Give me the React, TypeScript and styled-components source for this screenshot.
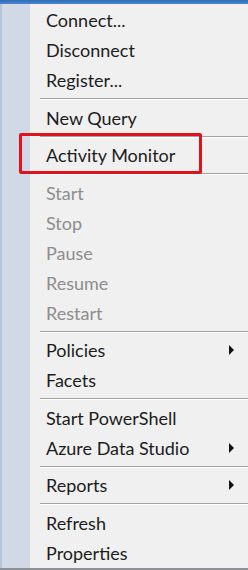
import React from "react";
import styled, { createGlobalStyle } from "styled-components";

const GlobalStyle = createGlobalStyle`
  html, body {
    margin: 0;
    padding: 0;
    background: #f0f0f0;
  }
  body {
    font-family: Lato, "Noto Sans", sans-serif;
  }
`;

type Entry =
  | { kind: "item"; label: string; disabled?: boolean; submenu?: boolean; highlighted?: boolean }
  | { kind: "sep" };

const entries: Entry[] = [
  { kind: "item", label: "Connect..." },
  { kind: "item", label: "Disconnect" },
  { kind: "item", label: "Register..." },
  { kind: "sep" },
  { kind: "item", label: "New Query" },
  { kind: "sep" },
  { kind: "item", label: "Activity Monitor", highlighted: true },
  { kind: "sep" },
  { kind: "item", label: "Start", disabled: true },
  { kind: "item", label: "Stop", disabled: true },
  { kind: "item", label: "Pause", disabled: true },
  { kind: "item", label: "Resume", disabled: true },
  { kind: "item", label: "Restart", disabled: true },
  { kind: "sep" },
  { kind: "item", label: "Policies", submenu: true },
  { kind: "item", label: "Facets" },
  { kind: "sep" },
  { kind: "item", label: "Start PowerShell" },
  { kind: "item", label: "Azure Data Studio", submenu: true },
  { kind: "sep" },
  { kind: "item", label: "Reports", submenu: true },
  { kind: "sep" },
  { kind: "item", label: "Refresh" },
  { kind: "item", label: "Properties" },
];

export default function App() {
  return (
    <>
      <GlobalStyle />
      <Screen>
        <TitleStrip />
        <Menu>
          <Gutter />
          <List>
            {entries.map((e, i) =>
              e.kind === "sep" ? (
                <Separator key={i} />
              ) : (
                <Item key={i} $disabled={e.disabled}>
                  <Label>{e.label}</Label>
                  {e.submenu && <Arrow />}
                  {e.highlighted && <Highlight />}
                </Item>
              )
            )}
          </List>
        </Menu>
      </Screen>
    </>
  );
}

const Screen = styled.div`
  width: 248px;
  height: 570px;
  display: flex;
  flex-direction: column;
  overflow: hidden;
`;

const TitleStrip = styled.div`
  height: 4px;
  flex: none;
  background: linear-gradient(180deg, #2f6cb8 0%, #4a86cc 100%);
`;

const Menu = styled.div`
  flex: 1;
  display: flex;
  border-bottom: 2px solid #8d9096;
  padding-top: 1px;
  background: #f0f0f0;
`;

const Gutter = styled.div`
  width: 28px;
  flex: none;
  background: #d0d9e5;
  border-left: 2px solid #b5c6da;
  margin-top: -1px;
`;

const List = styled.div`
  flex: 1;
  display: flex;
  flex-direction: column;
`;

const Item = styled.div<{ $disabled?: boolean }>`
  position: relative;
  height: 30px;
  display: flex;
  align-items: center;
  padding-left: 16px;
  font-size: 18px;
  color: ${(p) => (p.$disabled ? "#8d8d8d" : "#1c1c1c")};
`;

const Label = styled.span`
  flex: 1;
  white-space: nowrap;
`;

const Arrow = styled.span`
  width: 0;
  height: 0;
  margin-right: 14px;
  border-top: 5px solid transparent;
  border-bottom: 5px solid transparent;
  border-left: 5px solid #111;
`;

const Highlight = styled.span`
  position: absolute;
  left: -11px;
  top: -7px;
  width: 183px;
  height: 41px;
  box-sizing: border-box;
  border: 3px solid #e0121c;
  border-radius: 2px;
`;

const Separator = styled.div`
  height: 7.5px;
  margin-left: 10px;
  display: flex;
  align-items: center;

  &::before {
    content: "";
    flex: 1;
    height: 1px;
    background: #a3a3a3;
    box-shadow: 0 1px 0 #ffffff;
  }
`;
